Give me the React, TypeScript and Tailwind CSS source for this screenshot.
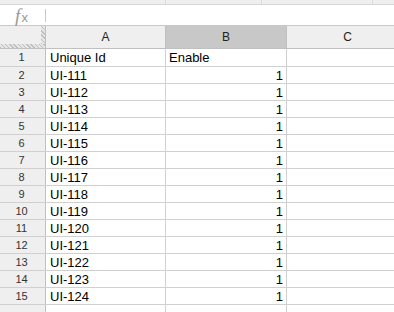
import React from "react";

const rows = [
  { a: "Unique Id", b: "Enable" },
  ...Array.from({ length: 14 }, (_, i) => ({ a: `UI-${111 + i}`, b: "1" })),
];

export default function App() {
  return (
    <div className="h-[312px] w-[394px] overflow-hidden bg-white font-['Liberation_Sans',Arial,sans-serif] text-[#000]">
      {/* toolbar remnant */}
      <div className="flex h-[5px] border-b border-[#d6d6d6] bg-[#efefef]">
        <div className="w-[166px] shrink-0 border-r border-[#dcdcdc]" />
        <div className="w-[96px] shrink-0 border-r border-[#dcdcdc]" />
        <div className="w-[111px] shrink-0 border-r border-[#dcdcdc]" />
      </div>

      {/* formula bar */}
      <div className="flex h-[21px] items-center border-b border-[#c9c9c9] bg-white">
        <div className="flex w-[45px] shrink-0 items-center justify-center pr-[2px] text-[#999]">
          <span className="font-['Liberation_Serif',serif] text-[19px] italic leading-none">f</span>
          <span className="ml-[1px] mt-[4px] text-[13px] leading-none">x</span>
        </div>
        <div className="h-[13px] w-px bg-[#bfcadd]" />
      </div>

      {/* column headers */}
      <div className="flex h-[23px] border-b border-[#c0c0c0] text-[12px] text-[#222]">
        <div className="relative w-[46px] shrink-0 border-r border-[#c0c0c0] bg-[#efefef]">
          <div className="absolute right-0 top-0 h-full w-[4px] bg-[repeating-linear-gradient(45deg,#bdbdbd_0_1px,#e6e6e6_1px_3px)]" />
          <div className="absolute bottom-0 left-0 h-[4px] w-full bg-[repeating-linear-gradient(45deg,#bdbdbd_0_1px,#e6e6e6_1px_3px)]" />
        </div>
        <div className="flex w-[120px] shrink-0 items-center justify-center border-r border-[#c0c0c0] bg-[#efefef]">A</div>
        <div className="flex w-[121px] shrink-0 items-center justify-center border-r border-[#c0c0c0] bg-[#c8c8c8]">B</div>
        <div className="flex w-[122px] shrink-0 items-center justify-center border-r border-[#c0c0c0] bg-[#efefef]">C</div>
      </div>

      {/* grid */}
      {rows.map((r, i) => (
        <div
          key={i}
          className={`flex border-b border-[#d0d0d0] text-[13px] ${i === 0 ? "h-[18px]" : "h-[17px]"}`}
        >
          <div className="flex w-[46px] shrink-0 items-center justify-center border-r border-[#c0c0c0] bg-[#efefef] pr-[2px] text-[11px] text-[#333]">
            {i + 1}
          </div>
          <div className="flex w-[120px] shrink-0 items-center border-r border-[#d0d0d0] pl-[4px] leading-none">
            {r.a}
          </div>
          <div
            className={`flex w-[121px] shrink-0 items-center border-r border-[#d0d0d0] leading-none ${
              i === 0 ? "pl-[3px]" : "justify-end pr-[3px]"
            }`}
          >
            {r.b}
          </div>
          <div className="w-[122px] shrink-0 border-r border-[#d0d0d0]" />
        </div>
      ))}

      {/* partial next row */}
      <div className="flex h-[17px]">
        <div className="w-[46px] shrink-0 border-r border-[#c0c0c0] bg-[#efefef]" />
        <div className="w-[120px] shrink-0 border-r border-[#d0d0d0]" />
        <div className="w-[121px] shrink-0 border-r border-[#d0d0d0]" />
        <div className="w-[122px] shrink-0 border-r border-[#d0d0d0]" />
      </div>
    </div>
  );
}
